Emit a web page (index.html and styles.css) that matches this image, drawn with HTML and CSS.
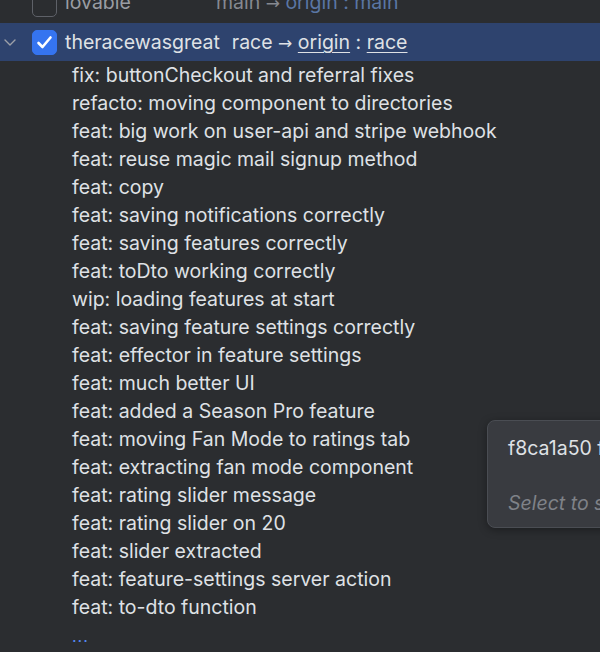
FILE: index.html
```html
<!DOCTYPE html>
<html>
<head>
<meta charset="utf-8">
<link rel="stylesheet" href="styles.css">
</head>
<body>
<div class="panel">
  <div class="repo dim">
    <span class="chev"></span>
    <span class="cb"></span>
    <span class="name">lovable</span>
    <span class="branch">main <span class="arrow">→</span> <span class="remote">origin : main</span></span>
  </div>
  <div class="repo sel">
    <span class="chev"><svg width="14" height="10" viewBox="0 0 14 10"><path d="M2 3 L7 8 L12 3" fill="none" stroke="#9da0a8" stroke-width="1.4" stroke-linecap="round" stroke-linejoin="round"/></svg></span>
    <span class="cb on"><svg width="17" height="15" viewBox="0 0 17 15"><path d="M2.5 8 L6.5 12 L14.5 2.5" fill="none" stroke="#fff" stroke-width="2.6" stroke-linecap="round" stroke-linejoin="round"/></svg></span>
    <span class="name">theracewasgreat</span>
    <span class="branch">race <span class="arrow">→</span> <u>origin</u> : <u>race</u></span>
  </div>
  <ul class="commits">
    <li>fix: buttonCheckout and referral fixes</li>
    <li>refacto: moving component to directories</li>
    <li>feat: big work on user-api and stripe webhook</li>
    <li>feat: reuse magic mail signup method</li>
    <li>feat: copy</li>
    <li>feat: saving notifications correctly</li>
    <li>feat: saving features correctly</li>
    <li>feat: toDto working correctly</li>
    <li>wip: loading features at start</li>
    <li>feat: saving feature settings correctly</li>
    <li>feat: effector in feature settings</li>
    <li>feat: much better UI</li>
    <li>feat: added a Season Pro feature</li>
    <li>feat: moving Fan Mode to ratings tab</li>
    <li>feat: extracting fan mode component</li>
    <li>feat: rating slider message</li>
    <li>feat: rating slider on 20</li>
    <li>feat: slider extracted</li>
    <li>feat: feature-settings server action</li>
    <li>feat: to-dto function</li>
    <li class="more">...</li>
  </ul>
  <div class="popup">
    <div class="hash">f8ca1a50 fix: buttonCheckout</div>
    <div class="hint">Select to show details</div>
  </div>
</div>
</body>
</html>
```
FILE: styles.css
```css
html, body {
  margin: 0;
  padding: 0;
  background: #2b2d30;
}
.panel {
  position: relative;
  width: 600px;
  height: 652px;
  overflow: hidden;
  background: #2b2d30;
  font-family: Inter, "Noto Sans", sans-serif;
  font-size: 19.5px;
  color: #dfe1e5;
}
.repo {
  display: flex;
  align-items: center;
  height: 38px;
  box-sizing: border-box;
  white-space: nowrap;
}
.repo.dim {
  margin-top: -15px;
  padding-bottom: 4px;
  color: #9a9da3;
}
.repo.dim .cb {
  margin-top: 4px;
}
.repo.sel {
  background: #2e436e;
}
.chev {
  width: 32px;
  display: flex;
  justify-content: flex-start;
  padding-left: 3px;
  box-sizing: border-box;
}
.cb {
  width: 25px;
  height: 25px;
  box-sizing: border-box;
  border: 1.5px solid #5e6168;
  border-radius: 5px;
  display: flex;
  align-items: center;
  justify-content: center;
  flex: none;
}
.cb.on {
  background: #3574f0;
  border-color: #3574f0;
}
.name {
  margin-left: 8px;
}
.branch {
  margin-left: 12px;
}
.dim .branch {
  margin-left: 85px;
  color: #868990;
}
.dim .remote {
  color: #5a76a4;
}
.sel .branch {
  color: #dfe1e5;
}
.arrow {
  font-family: "DejaVu Sans", sans-serif;
  font-size: 17px;
}
u {
  text-decoration-thickness: 1px;
  text-underline-offset: 3px;
}
.commits {
  list-style: none;
  margin: 0;
  padding: 0 0 0 72px;
}
.commits li {
  height: 28px;
  line-height: 29px;
  white-space: nowrap;
}
.commits li.more {
  color: #548af7;
  height: 34px;
  line-height: 30px;
  font-size: 16px;
  letter-spacing: 1px;
}
.popup {
  position: absolute;
  left: 487px;
  top: 420px;
  width: 260px;
  height: 108px;
  box-sizing: border-box;
  background: #393b40;
  border: 1px solid #4a4d53;
  border-radius: 8px;
  padding: 13px 0 0 20px;
  box-shadow: 0 2px 8px rgba(0,0,0,0.35);
  white-space: nowrap;
}
.hash {
  color: #dfe1e5;
  line-height: 28px;
}
.hint {
  margin-top: 27px;
  color: #7f8288;
  font-style: italic;
  line-height: 28px;
}
```
